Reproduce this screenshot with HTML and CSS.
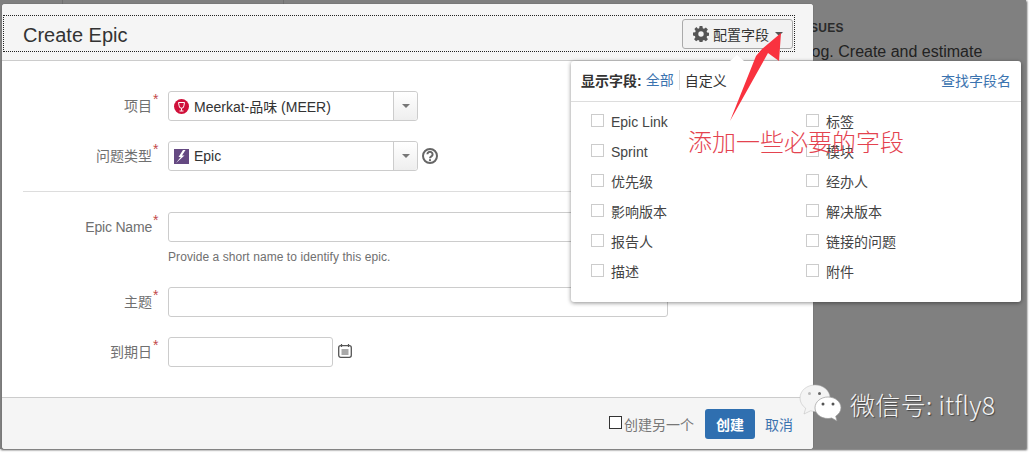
FILE: index.html
```html
<!DOCTYPE html>
<html lang="zh">
<head>
<meta charset="utf-8">
<title>Create Epic</title>
<link rel="stylesheet" href="styles.css">
</head>
<body>
<div class="screen">
  <div class="backdrop-line line-a"></div>
  <div class="backdrop-line line-b"></div>
  <div class="bg-text bg-heading">ISSUES</div>
  <div class="bg-text bg-copy">log. Create and estimate</div>

  <section class="dialog">
    <header class="dialog-head">
      <div class="focus-box">
        <h1 class="dialog-title">Create Epic</h1>
        <button class="config-btn" type="button">
          <svg class="gear" viewBox="0 0 16 16" width="16" height="16"><path fill="#555" fill-rule="evenodd" d="M6.6 0h2.8l.4 2.2 1.2.5L12.9 1.400l2 2-1.300 1.900.5 1.200 2.200.4v2.800l-2.200.4-.5 1.200 1.300 1.900-2 2-1.900-1.300-1.200.5-.4 2.200H6.600l-.4-2.200-1.200-.5-1.900 1.300-2-2 1.300-1.900-.5-1.200L0 9.400V6.600l2.200-.4.5-1.200L1.400 3.100l2-2L5 2.700l1.200-.5zM8 5.300a2.700 2.700 0 1 0 0 5.400 2.700 2.700 0 0 0 0-5.400z"/></svg>
          <span>配置字段</span>
          <i class="caret"></i>
        </button>
      </div>
    </header>

    <div class="dialog-body">
      <div class="row">
        <label class="field-label">项目<b class="star">*</b></label>
        <div class="select">
          <svg class="sel-icon" viewBox="0 0 15 15" width="15" height="15"><circle cx="7.500" cy="7.500" r="7.500" fill="#d0103a"/><path fill="none" stroke="#fff" stroke-width="1" d="M4.500 3.500h6l-.6 3.300a2.400 2.400 0 0 1-4.800 0zM7.500 9.200v2.600M5.500 12h4"/></svg>
          <span class="sel-text">Meerkat-品味 (MEER)</span>
          <span class="sel-arrow"><i class="caret"></i></span>
        </div>
      </div>
      <div class="row">
        <label class="field-label">问题类型<b class="star">*</b></label>
        <div class="select">
          <svg class="sel-icon" viewBox="0 0 15 15" width="15" height="15"><rect width="15" height="15" fill="#654982"/><path fill="#fff" d="M9 1 4.500 8h2.300L2 14l8.500-7.500H8l3.500-5.500z"/></svg>
          <span class="sel-text">Epic</span>
          <span class="sel-arrow"><i class="caret"></i></span>
        </div>
        <svg class="help" viewBox="0 0 16 16" width="16" height="16"><circle cx="8" cy="8" r="7" fill="none" stroke="#666" stroke-width="2"/><path fill="none" stroke="#666" stroke-width="2" d="M5.400 6.300a2.600 2.400 0 1 1 4 2c-.9.600-1.400 1-1.400 1.900"/><circle cx="8" cy="12.200" r="1.100" fill="#666"/></svg>
      </div>
      <hr class="divider">
      <div class="row">
        <label class="field-label label-latin">Epic Name<b class="star">*</b></label>
        <div class="input input-wide"></div>
      </div>
      <div class="hint">Provide a short name to identify this epic.</div>
      <div class="row">
        <label class="field-label">主题<b class="star">*</b></label>
        <div class="input input-wide"></div>
      </div>
      <div class="row">
        <label class="field-label">到期日<b class="star">*</b></label>
        <div class="input input-date"></div>
        <svg class="cal" viewBox="0 0 14 14" width="14" height="14"><rect x=".7" y="1.700" width="12.600" height="11.600" rx="2" fill="none" stroke="#555" stroke-width="1.300"/><path stroke="#555" stroke-width="1.200" d="M3.500 0v3M10.500 0v3M3.500 6h7M3.500 8h7M3.500 10h7"/></svg>
      </div>
    </div>

    <footer class="dialog-foot">
      <span class="foot-check"></span>
      <span class="foot-label">创建另一个</span>
      <button class="create-btn" type="button">创建</button>
      <a class="cancel">取消</a>
    </footer>
  </section>

  <aside class="popup">
    <span class="notch"></span>
    <div class="popup-head">
      <strong class="popup-strong">显示字段:</strong>
      <a class="link tab-all">全部</a>
      <span class="tab-custom">自定义</span>
      <a class="link find">查找字段名</a>
    </div>
    <div class="popup-grid">
      <div class="opt"><i class="box"></i><span class="opt-text">Epic Link</span></div>
      <div class="opt"><i class="box"></i><span class="opt-text">标签</span></div>
      <div class="opt"><i class="box"></i><span class="opt-text">Sprint</span></div>
      <div class="opt"><i class="box"></i><span class="opt-text">模块</span></div>
      <div class="opt"><i class="box"></i><span class="opt-text">优先级</span></div>
      <div class="opt"><i class="box"></i><span class="opt-text">经办人</span></div>
      <div class="opt"><i class="box"></i><span class="opt-text">影响版本</span></div>
      <div class="opt"><i class="box"></i><span class="opt-text">解决版本</span></div>
      <div class="opt"><i class="box"></i><span class="opt-text">报告人</span></div>
      <div class="opt"><i class="box"></i><span class="opt-text">链接的问题</span></div>
      <div class="opt"><i class="box"></i><span class="opt-text">描述</span></div>
      <div class="opt"><i class="box"></i><span class="opt-text">附件</span></div>
    </div>
  </aside>

  <svg class="arrow" viewBox="0 0 1030 453" width="1030" height="453"><polygon fill="#f9323f" points="781,33 779,61 768,53 730,121 756,56 762,49"/></svg>
  <div class="note">添加一些必要的字段</div>

  <div class="watermark">
    <svg class="wechat" viewBox="0 0 44 40" width="44" height="40">
      <path fill="#f4f4f4" stroke="#bbb" stroke-width=".5" d="M16 1C7.700 1 1 6.700 1 14c0 4.200 2.200 7.800 5.700 10.200L5 30l6.500-3.200c1.500.4 3 .6 4.500.6 8.300 0 15-5.900 15-13.200C31 6.700 24.300 1 16 1z"/>
      <path fill="#fff" stroke="#999" stroke-width=".7" d="M29 13c-7.200 0-13 4.800-13 10.800S21.800 34.500 29 34.500c1.300 0 2.500-.2 3.700-.5l5.300 3-1.300-4.700c3-2 5.300-5 5.300-8.500C42 17.800 36.200 13 29 13z"/>
      <circle cx="10.500" cy="9.500" r="1.500" fill="#bbb"/><circle cx="20.500" cy="9.500" r="1.500" fill="#666"/>
      <circle cx="24" cy="20" r="1.500" fill="#555"/><circle cx="34" cy="20" r="1.500" fill="#555"/>
    </svg>
    <span class="wm-text">微信号: itfly8</span>
  </div>
</div>
</body>
</html>
```
FILE: styles.css
```css
* { box-sizing: border-box; }
html, body { margin: 0; padding: 0; background: #fff; }
body { width: 1030px; height: 453px; overflow: hidden; font-family: "Liberation Sans", "Noto Sans CJK SC", sans-serif; font-size: 14px; color: #333; }

.screen { position: relative; width: 1026px; height: 449px; background: #808080; box-shadow: 1px 1px 2px #555; }
.backdrop-line { position: absolute; top: 0; width: 1px; height: 4px; background: #707070; }
.line-a { left: 62px; }
.line-b { left: 283px; }
.bg-text { position: absolute; color: #222; white-space: nowrap; }
.bg-heading { left: 798px; top: 21px; font-size: 12px; font-weight: bold; letter-spacing: .3px; color: #2a2a2a; line-height: 14px; }
.bg-copy { left: 808px; top: 43px; font-size: 16px; line-height: 18px; }

.dialog { position: absolute; left: 2px; top: 4px; width: 811px; height: 445px; background: #fff; border-radius: 3px; display: flex; flex-direction: column; overflow: hidden; box-shadow: 0 0 1px #444; }
.dialog-head { height: 57px; background: #f5f5f5; border-bottom: 1px solid #ccc; padding: 11px 0 0 1px; flex: none; }
.focus-box { width: 792px; height: 37px; border: 1px dotted #222; display: flex; align-items: center; justify-content: space-between; padding: 0 1px 0 19px; }
.dialog-title { margin: 2px 0 0; font-size: 20px; font-weight: 400; color: #333; line-height: 24px; }
.config-btn { width: 111px; height: 30px; margin: 0; padding: 0 0 0 10px; border: 1px solid #aaa; border-radius: 3px; background: #f2f2f2; display: flex; align-items: center; font: inherit; font-size: 13px; color: #333; }
.gear { margin-right: 4px; flex: none; }
.config-btn span { font-size: 14px; width: 56px; text-align: left; }
.caret { display: block; width: 0; height: 0; border: 4px solid transparent; border-top: 4px solid #777; border-bottom: 0; }
.config-btn .caret { margin-left: 6px; border-top-color: #555; }

.dialog-body { flex: 1; padding-top: 30px; }
.row { display: grid; grid-template-columns: 150px max-content max-content; column-gap: 16px; align-items: center; height: 30px; margin-bottom: 20px; }
.field-label { position: relative; justify-self: end; color: #707070; font-size: 14px; line-height: 20px; }
.label-latin { letter-spacing: -.2px; }
.star { position: absolute; left: 100%; top: -4px; font-weight: 400; font-size: 14px; color: #c24a4a; line-height: 14px; margin-left: 1px; }

.select { width: 250px; height: 30px; border: 1px solid #ccc; border-radius: 3px; background: #fff; display: flex; align-items: center; padding-left: 5px; }
.sel-icon { flex: none; margin-right: 5px; }
.sel-text { flex: 1; color: #333; font-size: 14px; }
.sel-arrow { width: 24px; height: 28px; border-left: 1px solid #ccc; background: linear-gradient(#fff, #eee); display: flex; align-items: center; justify-content: center; border-radius: 0 3px 3px 0; }
.help { margin-left: -12px; }

.divider { margin: 0 22px 20px 21px; border: 0; border-top: 1px solid #ddd; height: 1px; }
.input { height: 30px; border: 1px solid #ccc; border-radius: 3px; background: #fff; }
.input-wide { width: 500px; }
.input-date { width: 165px; }
.cal { margin: -3px 0 0 -11px; }
.row:has(+ .hint) { margin-bottom: 0; }
.hint { margin: 8px 0 15px 166px; font-size: 12px; line-height: 14px; color: #707070; letter-spacing: .07px; height: 22px; }

.dialog-foot { flex: none; height: 52px; background: #f5f5f5; border-top: 1px solid #ccc; display: flex; align-items: center; justify-content: flex-end; padding-right: 20px; }
.foot-check { width: 13px; height: 13px; border: 1px solid #333; background: #fff; margin-right: 2px; margin-top: -3px; }
.foot-label { color: #777; font-size: 14px; margin-right: 11px; }
.create-btn { width: 50px; height: 30px; border: 0; border-radius: 3px; background: #2f6fb0; color: #fff; font: inherit; font-weight: bold; font-size: 14px; padding: 0; }
.cancel { color: #3b73af; margin-left: 10px; }

.popup { position: absolute; left: 571px; top: 61px; width: 450px; height: 241px; background: #fff; border-radius: 3px; box-shadow: 0 1px 4px rgba(0,0,0,.45); }
.notch { position: absolute; left: 159px; top: -6px; width: 0; height: 0; border: 7px solid transparent; border-top: 0; border-bottom: 6px solid #fff; }
.popup-head { height: 41px; border-bottom: 1px solid #ddd; display: flex; align-items: center; padding: 0 10px 2px; font-size: 14px; }
.popup-strong { font-weight: bold; font-size: 14px; margin-right: 4px; }
.link { color: #3b73af; }
.tab-all { padding-right: 5px; border-right: 1px solid #ddd; line-height: 20px; margin-right: 5px; }
.find { margin-left: auto; }
.popup-grid { display: grid; grid-template-columns: 215px 215px; padding: 5px 0 0 20px; grid-auto-rows: 30px; }
.opt { display: flex; align-items: center; color: #444; font-size: 14px; }
.opt-text { display: block; height: 20px; line-height: 20px; }
.box { width: 13px; height: 13px; border: 1px solid #ccc; margin-right: 7px; margin-top: -3px; background: #fff; flex: none; }

.arrow { position: absolute; left: 0; top: 0; pointer-events: none; }
.note { position: absolute; left: 688px; top: 126px; font-size: 24px; line-height: 30px; color: #e4434f; font-family: "Noto Sans CJK SC", sans-serif; font-weight: 300; white-space: nowrap; }

.watermark { position: absolute; left: 799px; top: 384px; display: flex; align-items: center; }
.wechat { flex: none; margin-right: 7px; }
.wm-text { color: #f4f4f4; font-family: "Noto Sans CJK SC", sans-serif; font-size: 25px; line-height: 36px; font-weight: 300; letter-spacing: .35px; text-shadow: 1px 1px 1px #444; white-space: nowrap; }
```
